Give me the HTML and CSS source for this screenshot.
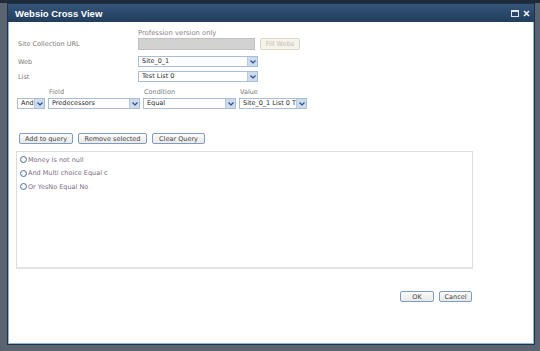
FILE: index.html
```html
<!DOCTYPE html>
<html lang="en">
<head>
    <meta charset="UTF-8">
    <title>Websio Cross View</title>
    <link rel="stylesheet" href="styles.css">
</head>
<body>
    <div class="dialog">
        <div class="titlebar">
            <span class="title">Websio Cross View</span>
            <span class="title-icons">
                <svg width="8" height="7" viewBox="0 0 8 7"><rect x="0.5" y="0.5" width="7" height="6" fill="none" stroke="#dfe6ee"/><rect x="0" y="0" width="8" height="2" fill="#dfe6ee"/></svg>
                <svg width="7" height="7" viewBox="0 0 7 7"><path d="M1 1 L6 6 M6 1 L1 6" stroke="#eef2f6" stroke-width="1.6"/></svg>
            </span>
        </div>
        <div class="content">
            <div class="note">Profession version only</div>
            <div class="row row-url">
                <span class="label">Site Collection URL</span>
                <span class="url-input"></span>
                <span class="btn btn-disabled">Fill Webs</span>
            </div>
            <div class="row row-web">
                <span class="label">Web</span>
                <div class="select wide"><span class="val">Site_0_1</span><span class="arrow"><svg width="6" height="4" viewBox="0 0 6 4"><path d="M0.5 0.5 L3 3 L5.5 0.5" fill="none" stroke="#2d4f85" stroke-width="1.2"/></svg></span></div>
            </div>
            <div class="row row-list">
                <span class="label">List</span>
                <div class="select wide"><span class="val">Test List 0</span><span class="arrow"><svg width="6" height="4" viewBox="0 0 6 4"><path d="M0.5 0.5 L3 3 L5.5 0.5" fill="none" stroke="#2d4f85" stroke-width="1.2"/></svg></span></div>
            </div>
            <div class="criteria heads">
                <span></span>
                <span class="head">Field</span>
                <span class="head">Condition</span>
                <span class="head">Value</span>
            </div>
            <div class="criteria">
                <div class="select"><span class="val">And</span><span class="arrow"><svg width="6" height="4" viewBox="0 0 6 4"><path d="M0.5 0.5 L3 3 L5.5 0.5" fill="none" stroke="#2d4f85" stroke-width="1.2"/></svg></span></div>
                <div class="select"><span class="val">Predecessors</span><span class="arrow"><svg width="6" height="4" viewBox="0 0 6 4"><path d="M0.5 0.5 L3 3 L5.5 0.5" fill="none" stroke="#2d4f85" stroke-width="1.2"/></svg></span></div>
                <div class="select"><span class="val">Equal</span><span class="arrow"><svg width="6" height="4" viewBox="0 0 6 4"><path d="M0.5 0.5 L3 3 L5.5 0.5" fill="none" stroke="#2d4f85" stroke-width="1.2"/></svg></span></div>
                <div class="select"><span class="val">Site_0_1 List 0 T</span><span class="arrow"><svg width="6" height="4" viewBox="0 0 6 4"><path d="M0.5 0.5 L3 3 L5.5 0.5" fill="none" stroke="#2d4f85" stroke-width="1.2"/></svg></span></div>
            </div>
            <div class="actions">
                <span class="btn btn-add">Add to query</span>
                <span class="btn btn-remove">Remove selected</span>
                <span class="btn btn-clear">Clear Query</span>
            </div>
            <div class="query-box">
                <div class="item"><span class="radio"></span>Money Is not null</div>
                <div class="item"><span class="radio"></span>And Multi choice Equal c</div>
                <div class="item"><span class="radio"></span>Or YesNo Equal No</div>
            </div>
            <div class="footer">
                <span class="btn btn-ok">OK</span>
                <span class="btn btn-cancel">Cancel</span>
            </div>
        </div>
    </div>
</body>
</html>
```

FILE: styles.css
```css
body {
    margin: 0;
    padding: 3px 0 0 7px;
    height: 351px;
    box-sizing: border-box;
    overflow: hidden;
    font-family: "DejaVu Sans", Verdana, sans-serif;
    font-size: 6.5px;
    background: linear-gradient(#1d2b3b 0, #1d2b3b 3px, #5a6470 3px);
}
.dialog {
    width: 526px;
    height: 340px;
    border: 1px solid #1f344b;
    background-color: #fff;
    box-shadow: inset 0 0 0 1px #8db6da;
    display: flex;
    flex-direction: column;
}
.titlebar {
    height: 18px;
    background: linear-gradient(#35557a, #223d5c);
    display: flex;
    align-items: center;
    justify-content: space-between;
    padding: 0 4px 0 7px;
}
.title {
    color: #fff;
    font-family: "Liberation Sans", Arial, sans-serif;
    font-weight: bold;
    font-size: 9.5px;
}
.title-icons {
    display: flex;
    gap: 4px;
    align-items: center;
}
.content {
    flex: 1;
    padding: 7px 62px 0 9px;
    display: flex;
    flex-direction: column;
}
.note {
    margin-left: 121px;
    height: 9px;
    line-height: 9px;
    color: #8c7e8e;
    font-size: 6.8px;
}
.row {
    display: flex;
    align-items: center;
}
.label {
    width: 120px;
    margin-left: 1px;
    color: #7a7a7a;
}
.row-url {
    height: 12px;
}
.row-web {
    height: 11px;
    margin-top: 6px;
}
.row-list {
    height: 11px;
    margin-top: 4px;
}
.url-input {
    width: 117px;
    height: 12px;
    box-sizing: border-box;
    background-color: #d2d2d2;
    border: 1px solid #c0c0c0;
}
.select {
    height: 11px;
    box-sizing: border-box;
    border: 1px solid #a9bdd6;
    background-color: #fff;
    display: flex;
    align-items: stretch;
    overflow: hidden;
}
.select .val {
    flex: 1;
    padding-left: 3px;
    color: #2a2a2a;
    line-height: 9px;
    white-space: nowrap;
    overflow: hidden;
}
.select .arrow {
    width: 9px;
    background-color: #cddbef;
    border-left: 1px solid #b8c9e0;
    display: flex;
    align-items: center;
    justify-content: center;
}
.select.wide {
    width: 120px;
}
.criteria {
    display: grid;
    grid-template-columns: 28px 92px 93px 68px;
    column-gap: 3px;
}
.heads {
    margin-top: 6px;
    height: 8px;
    line-height: 8px;
    color: #7a7a7a;
}
.head {
    padding-left: 1px;
}
.criteria .select {
    margin-top: 2px;
}
.btn {
    display: flex;
    align-items: center;
    justify-content: center;
    height: 11px;
    box-sizing: border-box;
    border: 1px solid #7f9cbd;
    border-radius: 2px;
    background: linear-gradient(#fbfbfb, #e9e9e9);
    color: #444;
    font-size: 6.5px;
}
.btn-disabled {
    width: 40px;
    height: 12px;
    margin-left: 5px;
    border-color: #dcd8c6;
    background: #f5f3ec;
    color: #c4bcae;
}
.actions {
    display: flex;
    gap: 5px;
    margin: 24px 0 0 2px;
}
.btn-add { width: 54px; }
.btn-remove { width: 69px; }
.btn-clear { width: 53px; }
.query-box {
    margin: 7px 0 0 -1px;
    width: 457px;
    height: 118px;
    box-sizing: border-box;
    border: 1px solid #dcdcdc;
    border-bottom: 2px solid #e4e4e4;
    padding-top: 1px;
}
.item {
    display: flex;
    align-items: center;
    height: 13.5px;
    padding-left: 3px;
    color: #7c6c84;
}
.radio {
    width: 5px;
    height: 5px;
    border: 1px solid #4d6e96;
    border-radius: 50%;
    margin-right: 1px;
    background: #f6f8fb;
}
.footer {
    display: flex;
    justify-content: flex-end;
    gap: 5px;
    margin-top: 22px;
}
.btn-ok { width: 34px; }
.btn-cancel { width: 33px; }
```
